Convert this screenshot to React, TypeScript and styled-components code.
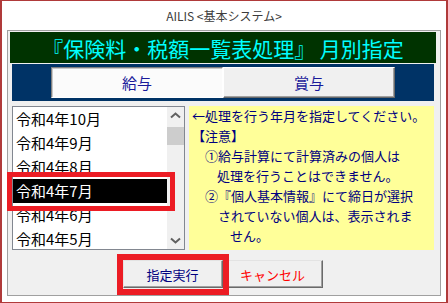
import React from "react";
import styled, { createGlobalStyle } from "styled-components";

const GlobalStyle = createGlobalStyle`
  html, body {
    margin: 0;
    padding: 0;
    background: #fff;
  }

  body {
    font-family: "Noto Sans CJK JP", "Noto Sans", sans-serif;
  }

  * {
    box-sizing: border-box;
  }
`;

const Window = styled.div`
    display: flex;
    flex-direction: column;

    width: 448px;
    height: 303px;

    border: solid #b03a3a;
    border-width: 1px 2px 1px 2px;
    background-color: #fff;
`;

const Caption = styled.div`
    display: flex;
    justify-content: center;
    align-items: center;

    height: 29px;

    font-size: 12px;
    color: #3c3c3c;
`;

const Panel = styled.section`
    display: flex;
    flex-direction: column;

    height: 266px;
    margin: 0 5px;
    padding-top: 1px;

    border: 1px solid #a0a0a0;
    background-color: #f0f0f0;
`;

const TitleBand = styled.h1`
    display: flex;
    justify-content: center;
    align-items: center;

    height: 31px;
    margin: 0 4px 0 2px;

    font-size: 21px;
    font-weight: 400;
    color: #00ffff;
    white-space: pre;

    background-color: #003300;
`;

const TabBar = styled.nav`
    display: flex;
    justify-content: center;
    align-items: center;

    height: 37px;
    margin: 1px 6px 0 4px;

    background-color: #003366;
`;

const Tab = styled.div<{ active?: boolean }>`
    display: flex;
    justify-content: center;
    align-items: center;

    width: 172px;
    height: 31px;

    font-size: 15px;
    color: #1a1a9a;

    border: 1px solid;
    border-color: ${props => props.active ? "#808080 #ffffff #ffffff #808080" : "#ffffff #696969 #696969 #ffffff"};
    box-shadow: ${props => props.active ? "inset 1px 1px #c8c8c8" : "inset -1px -1px #a0a0a0"};
    background-color: ${props => props.active ? "#fbfbfb" : "#f0f0f0"};
`;

const Content = styled.div`
    display: flex;
    gap: 4px;

    height: 144px;
    margin: 5px 6px 0 4px;
`;

const ListWrap = styled.div`
    position: relative;

    width: 173px;
`;

const ListBox = styled.div`
    display: flex;

    height: 100%;

    border: 1px solid #828790;
    background-color: #fff;
`;

const Rows = styled.ul`
    flex: 1;

    margin: 0;
    padding: 0;

    list-style: none;
    overflow: hidden;
`;

const Row = styled.li<{ selected?: boolean }>`
    height: 24px;
    padding-left: 3px;

    font-size: 15px;
    line-height: 24px;

    color: ${props => props.selected ? "#fff" : "#000"};
    background-color: ${props => props.selected ? "#000" : "transparent"};
`;

const ScrollBar = styled.div`
    display: flex;
    flex-direction: column;

    width: 17px;

    background-color: #f0f0f0;
`;

const ScrollArrow = styled.div`
    display: flex;
    justify-content: center;
    align-items: center;

    height: 17px;
`;

const Track = styled.div`
    flex: 1;
    padding-top: 3px;

    div {
        height: 18px;
        background-color: #cdcdcd;
    }
`;

const Highlight = styled.div`
    position: absolute;
    z-index: 2;

    border: 5px solid #ec1c24;
    pointer-events: none;
`;

const Note = styled.div`
    flex: 1;

    padding-left: 3px;

    font-size: 13px;
    line-height: 20px;
    color: #000080;

    background-color: #ffff99;
`;

const NoteLine = styled.div<{ indent?: number }>`
    padding-left: ${props => props.indent ?? 0}px;
    white-space: nowrap;
`;

const Actions = styled.div`
    display: flex;
    justify-content: center;

    height: 28px;
    margin: 10px 3px 0 0;
`;

const ButtonWrap = styled.div`
    position: relative;
`;

const Button = styled.button<{ tone: string }>`
    width: 100px;
    height: 28px;
    padding: 0;

    font-family: inherit;
    font-size: 13px;
    color: ${props => props.tone};

    border: 1px solid;
    border-color: #e3e3e3 #6a6a6a #6a6a6a #e3e3e3;
    box-shadow: inset -1px -1px #a0a0a0;
    background-color: #f0f0f0;
`;

const Chevron = ({ down }: { down?: boolean }) => (
    <svg width="11" height="7" viewBox="0 0 11 7">
        <polyline
            points={down ? "1,1.5 5.5,5.5 10,1.5" : "1,5.5 5.5,1.5 10,5.5"}
            fill="none"
            stroke="#606060"
            strokeWidth="2"
        />
    </svg>
);

const months = ["令和4年10月", "令和4年9月", "令和4年8月", "令和4年7月", "令和4年6月", "令和4年5月"];

export default function App() {
    return (
        <>
            <GlobalStyle />
            <Window>
                <Caption>AILIS &lt;基本システム&gt;</Caption>
                <Panel>
                    <TitleBand>『保険料・税額一覧表処理』 月別指定</TitleBand>
                    <TabBar>
                        <Tab active>給与</Tab>
                        <Tab>賞与</Tab>
                    </TabBar>
                    <Content>
                        <ListWrap>
                            <ListBox>
                                <Rows>
                                    {months.map(m => (
                                        <Row key={m} selected={m === "令和4年7月"}>{m}</Row>
                                    ))}
                                </Rows>
                                <ScrollBar>
                                    <ScrollArrow><Chevron /></ScrollArrow>
                                    <Track><div /></Track>
                                    <ScrollArrow><Chevron down /></ScrollArrow>
                                </ScrollBar>
                            </ListBox>
                            <Highlight style={{ left: -5, top: 66, width: 168, height: 39 }} />
                        </ListWrap>
                        <Note>
                            <NoteLine>←処理を行う年月を指定してください。</NoteLine>
                            <NoteLine>【注意】</NoteLine>
                            <NoteLine indent={13}>①給与計算にて計算済みの個人は</NoteLine>
                            <NoteLine indent={25}>処理を行うことはできません。</NoteLine>
                            <NoteLine indent={13}>②『個人基本情報』にて締日が選択</NoteLine>
                            <NoteLine indent={26}>されていない個人は、表示されま</NoteLine>
                            <NoteLine indent={38}>せん。</NoteLine>
                        </Note>
                    </Content>
                    <Actions>
                        <ButtonWrap>
                            <Button tone="#000080">指定実行</Button>
                            <Highlight style={{ left: -6, top: -6, right: -6, bottom: -7, borderWidth: 6 }} />
                        </ButtonWrap>
                        <Button tone="#ff0000">キャンセル</Button>
                    </Actions>
                </Panel>
            </Window>
        </>
    );
}
